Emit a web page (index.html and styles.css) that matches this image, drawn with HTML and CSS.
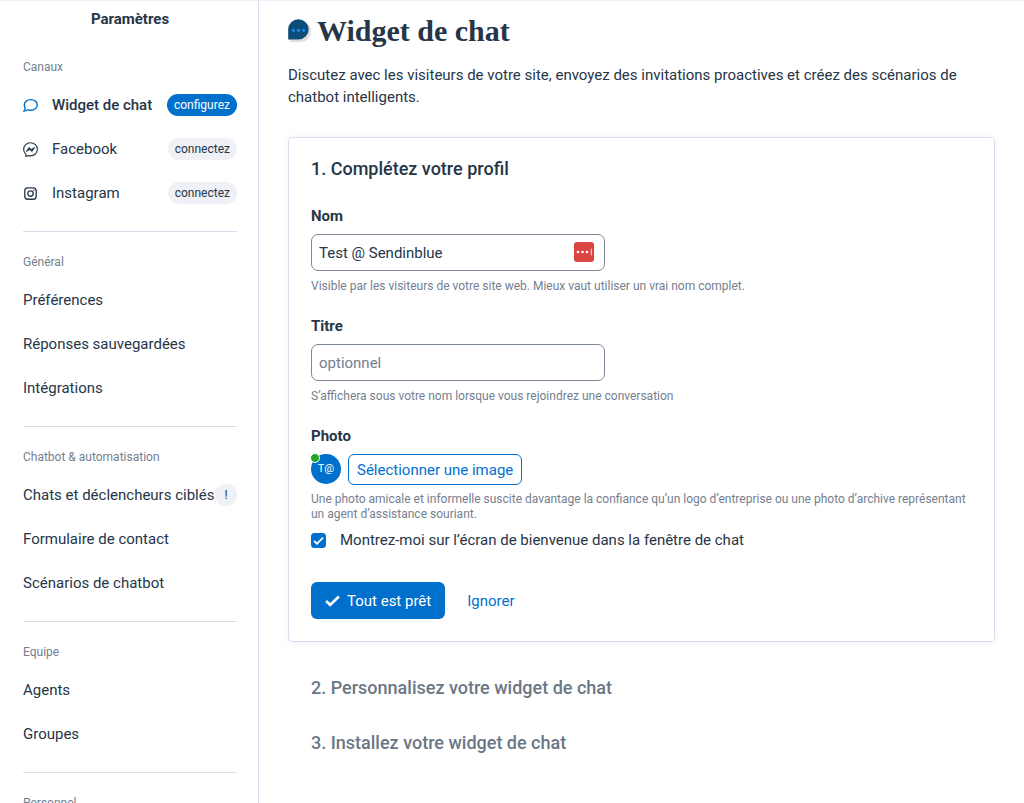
FILE: index.html
```html
<!DOCTYPE html>
<html lang="fr">

<head>
    <meta charset="UTF-8">
    <meta name="viewport" content="width=device-width, initial-scale=1.0">
    <title>Paramètres - Widget de chat</title>
    <link rel="stylesheet" href="styles.css">
</head>

<body>
    <div class="page-container">
        <!-- Menu des paramètres -->
        <nav class="sidebar">
            <h2 class="sidebar-title">Paramètres</h2>

            <section class="menu-section">
                <h3>Canaux</h3>
                <a href="#" class="menu-item active">
                    <svg class="menu-icon" viewBox="0 0 16 16" fill="none" stroke="currentColor" stroke-width="1.5" stroke-linejoin="round">
                        <path d="M8.300 1.700c3.900 0 6.900 2.400 6.900 5.700s-3 5.700-6.900 5.700c-1.200 0-2.300-.2-3.300-.7-1 1-2.500 1.600-4.200 1.600.9-1 1.400-1.900 1.500-3.100-.6-1-.9-2.200-.9-3.500 0-3.300 3-5.700 6.900-5.700z" />
                    </svg>
                    <span>Widget de chat</span>
                    <span class="badge badge-primary">configurez</span>
                </a>
                <a href="#" class="menu-item">
                    <svg class="menu-icon" viewBox="0 0 16 16" fill="none" stroke="currentColor" stroke-width="1.2" stroke-linejoin="round">
                        <path d="M8 .8c4.100 0 7.300 3 7.300 7S12.100 14.800 8 14.800c-.8 0-1.500-.1-2.200-.3L3.100 15.500v-2.200C1.600 12 .7 10.100.7 7.800c0-4 3.200-7 7.300-7z" />
                        <path d="M3.600 10.100l2.700-4.200 2.500 2 3.600-2-2.700 4.200-2.500-2z" fill="currentColor" stroke-width=".9" />
                    </svg>
                    <span>Facebook</span>
                    <span class="badge">connectez</span>
                </a>
                <a href="#" class="menu-item">
                    <svg class="menu-icon" viewBox="0 0 16 16" fill="none" stroke="currentColor" stroke-width="1.400">
                        <rect x="1.900" y="1.900" width="12.200" height="12.200" rx="3.200" />
                        <circle cx="8" cy="8" r="2.900" />
                        <circle cx="11.600" cy="4.400" r=".8" fill="currentColor" stroke="none" />
                    </svg>
                    <span>Instagram</span>
                    <span class="badge">connectez</span>
                </a>
            </section>

            <section class="menu-section">
                <h3>Général</h3>
                <a href="#" class="menu-item">Préférences</a>
                <a href="#" class="menu-item">Réponses sauvegardées</a>
                <a href="#" class="menu-item">Intégrations</a>
            </section>

            <section class="menu-section">
                <h3>Chatbot &amp; automatisation</h3>
                <a href="#" class="menu-item">Chats et déclencheurs ciblés <span class="badge badge-round">!</span></a>
                <a href="#" class="menu-item">Formulaire de contact</a>
                <a href="#" class="menu-item">Scénarios de chatbot</a>
            </section>

            <section class="menu-section">
                <h3>Equipe</h3>
                <a href="#" class="menu-item">Agents</a>
                <a href="#" class="menu-item">Groupes</a>
            </section>

            <section class="menu-section">
                <h3>Personnel</h3>
                <a href="#" class="menu-item">Profil</a>
            </section>
        </nav>

        <!-- Configuration du widget -->
        <main class="content">
            <h1>
                <svg class="title-icon" viewBox="0 0 24 24">
                    <path d="M12.500 2.200A10.400 10.400 0 1 1 12.500 23H2v-9z" fill="#e3dcdc" />
                    <path d="M10.400.2A10.200 10.200 0 1 1 10.400 20.600H.2V10.400A10.200 10.200 0 0 1 10.400.2z" fill="#0b4d78" />
                    <circle cx="5.400" cy="11.300" r="1.600" fill="#1e88e5" />
                    <circle cx="10.500" cy="11.300" r="1.600" fill="#1e88e5" />
                    <circle cx="15.600" cy="11.300" r="1.600" fill="#1e88e5" />
                </svg>
                Widget de chat
            </h1>
            <p class="intro">Discutez avec les visiteurs de votre site, envoyez des invitations proactives et créez des scénarios de chatbot intelligents.</p>

            <form class="card">
                <h2>1. Complétez votre profil</h2>

                <div class="field">
                    <label for="name-input">Nom</label>
                    <div class="input-wrapper">
                        <input type="text" id="name-input" value="Test @ Sendinblue">
                        <svg class="password-icon" viewBox="0 0 20 20">
                            <rect width="20" height="20" rx="3" fill="#db4542" />
                            <circle cx="4" cy="10" r="1.300" fill="#fff" />
                            <circle cx="8.500" cy="10" r="1.300" fill="#fff" />
                            <circle cx="13" cy="10" r="1.300" fill="#fff" />
                            <path d="M17.300 6.500v7" stroke="#fff" stroke-width=".8" />
                        </svg>
                    </div>
                    <p class="hint">Visible par les visiteurs de votre site web. Mieux vaut utiliser un vrai nom complet.</p>
                </div>

                <div class="field">
                    <label for="title-input">Titre</label>
                    <div class="input-wrapper">
                        <input type="text" id="title-input" placeholder="optionnel">
                    </div>
                    <p class="hint">S’affichera sous votre nom lorsque vous rejoindrez une conversation</p>
                </div>

                <div class="field photo-field">
                    <label for="photo-btn">Photo</label>
                    <div class="photo-row">
                        <div class="avatar">T@<span class="online-dot"></span></div>
                        <button type="button" id="photo-btn" class="outline-btn">Sélectionner une image</button>
                    </div>
                    <p class="hint">Une photo amicale et informelle suscite davantage la confiance qu’un logo d’entreprise ou une photo d’archive représentant un agent d’assistance souriant.</p>
                </div>

                <div class="checkbox-row">
                    <span class="checkbox">
                        <input type="checkbox" id="welcome-check" checked>
                        <svg viewBox="0 0 15 15" fill="none" stroke="#fff" stroke-width="1.700">
                            <path d="M3 7.800l3 2.900 6.200-6.200" />
                        </svg>
                    </span>
                    <label for="welcome-check">Montrez-moi sur l’écran de bienvenue dans la fenêtre de chat</label>
                </div>

                <div class="actions">
                    <button type="button" class="primary-btn">
                        <svg viewBox="0 0 16 12" fill="none" stroke="#fff" stroke-width="2.800">
                            <path d="M1.200 6l4.300 4.200L14.800 1.200" />
                        </svg>
                        Tout est prêt
                    </button>
                    <a href="#" class="skip-link">Ignorer</a>
                </div>
            </form>

            <h2 class="next-step">2. Personnalisez votre widget de chat</h2>
            <h2 class="next-step">3. Installez votre widget de chat</h2>
        </main>
    </div>
</body>

</html>
```
FILE: styles.css
```css
:root {
    --primary-color: #0070cc;
    --text-color: #263547;
    --muted-color: #74808f;
    --border-color: #d5e0ec;
    --badge-color: #eff1f6;
}

* {
    box-sizing: border-box;
    margin: 0;
    padding: 0;
}

body {
    font-family: Roboto, "Liberation Sans", sans-serif;
    font-size: 15px;
    line-height: 22px;
    color: var(--text-color);
    background-color: #fff;
    height: 100vh;
    overflow: hidden;
}

a {
    color: inherit;
    text-decoration: none;
}

.page-container {
    display: flex;
    height: 100vh;
    border-top: 1px solid #eef0f6;
}

/* Menu de gauche */
.sidebar {
    width: 259px;
    flex-shrink: 0;
    padding: 7px 21px 0 23px;
    border-right: 1px solid var(--border-color);
    overflow: hidden;
}

.sidebar-title {
    font-size: 15px;
    font-weight: 700;
    text-align: center;
    margin-bottom: 6px;
}

.menu-section {
    border-top: 1px solid var(--border-color);
    padding-bottom: 16px;
}

.sidebar-title + .menu-section {
    border-top-color: transparent;
}

.menu-section h3 {
    padding: 20px 0 6px;
    font-size: 12px;
    font-weight: 400;
    line-height: 20px;
    color: var(--muted-color);
}

.menu-item {
    display: flex;
    align-items: center;
    height: 44px;
    white-space: nowrap;
}

.menu-item.active {
    font-weight: 500;
}

.menu-icon {
    width: 15px;
    height: 15px;
    margin-right: 14px;
}

.active .menu-icon {
    color: var(--primary-color);
}

.badge {
    margin-left: auto;
    padding: 0 7px;
    border-radius: 11px;
    background-color: var(--badge-color);
    font-size: 12px;
    font-weight: 400;
    line-height: 22px;
}

.badge-primary {
    background-color: var(--primary-color);
    color: #fff;
}

.badge-round {
    width: 22px;
    padding: 0;
    text-align: center;
}

/* Contenu principal */
.content {
    flex-grow: 1;
    padding: 12px 29px 0;
}

h1 {
    display: flex;
    align-items: center;
    gap: 5px;
    font-family: "Liberation Serif", serif;
    font-size: 30px;
    font-weight: 700;
    line-height: 36px;
}

.title-icon {
    width: 24px;
    height: 24px;
}

.intro {
    max-width: 690px;
    margin: 15px 0 29px;
}

.card {
    padding: 19px 22px 22px;
    border: 1px solid var(--border-color);
    border-radius: 4px;
    box-shadow: 0 1px 6px rgba(60, 80, 140, 0.08);
}

.card h2,
.next-step {
    font-size: 18px;
    font-weight: 500;
    line-height: 24px;
}

.card h2 {
    margin-bottom: 24px;
}

.field {
    margin-bottom: 21px;
}

.field label {
    display: block;
    margin-bottom: 7px;
    font-weight: 700;
}

.input-wrapper {
    position: relative;
    width: 294px;
}

.input-wrapper input {
    display: block;
    width: 100%;
    height: 37px;
    padding: 0 7px;
    border: 1px solid #7b8794;
    border-radius: 7px;
    background-color: #fff;
    font: inherit;
    color: inherit;
}

.input-wrapper input::placeholder {
    color: var(--muted-color);
}

.password-icon {
    position: absolute;
    top: 8px;
    right: 11px;
    width: 20px;
    height: 20px;
}

.hint {
    margin-top: 8px;
    font-size: 12px;
    line-height: 15px;
    color: var(--muted-color);
}

.photo-field {
    margin-bottom: 7px;
}

.photo-row {
    display: flex;
    gap: 7px;
}

.photo-row + .hint {
    margin-top: 7px;
}

.avatar {
    position: relative;
    width: 30px;
    height: 30px;
    border-radius: 50%;
    background-color: var(--primary-color);
    color: #fff;
    font-size: 11px;
    line-height: 30px;
    text-align: center;
}

.online-dot {
    position: absolute;
    top: -1px;
    left: -1px;
    width: 10px;
    height: 10px;
    border: 1px solid #fff;
    border-radius: 50%;
    background-color: #22a722;
}

button {
    font: inherit;
    cursor: pointer;
}

.outline-btn {
    height: 31px;
    padding: 0 8px;
    border: 1px solid var(--primary-color);
    border-radius: 6px;
    background-color: #fff;
    color: var(--primary-color);
}

.checkbox-row {
    display: flex;
    align-items: center;
    gap: 14px;
    margin-bottom: 31px;
}

.checkbox {
    position: relative;
    width: 15px;
    height: 15px;
}

.checkbox input {
    display: block;
    width: 15px;
    height: 15px;
    appearance: none;
    border: 1px solid var(--primary-color);
    border-radius: 3px;
}

.checkbox input:checked {
    background-color: var(--primary-color);
}

.checkbox svg {
    position: absolute;
    inset: 0;
    pointer-events: none;
}

.actions {
    display: flex;
    align-items: center;
    gap: 22px;
}

.primary-btn {
    display: flex;
    align-items: center;
    gap: 7px;
    height: 37px;
    padding: 0 14px;
    border: none;
    border-radius: 6px;
    background-color: var(--primary-color);
    color: #fff;
}

.primary-btn svg {
    width: 15px;
    height: 12px;
}

.skip-link {
    color: var(--primary-color);
}

.next-step {
    margin: 31px 23px 0;
    color: #6b7785;
}

.card + .next-step {
    margin-top: 34px;
}
```
